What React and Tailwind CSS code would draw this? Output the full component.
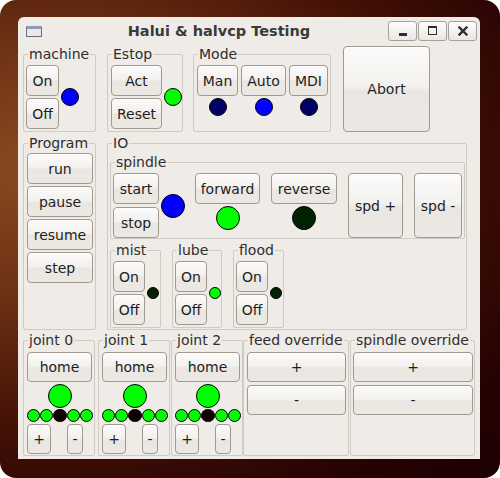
import React from "react";

const BTN =
  "flex items-center justify-center shrink-0 rounded-[4px] border border-[#a1988e] bg-[linear-gradient(to_bottom,#fcfbfa_0%,#f3f1ee_47%,#eae7e3_53%,#ece9e5_100%)] shadow-[inset_0_1px_0_#ffffff] text-[14px] leading-[16px] text-[#1e1e1e] font-['DejaVu_Sans',sans-serif]";

function Btn({ className = "", children }) {
  return <div className={`${BTN} ${className}`}>{children}</div>;
}

function Frame({ label, className = "", children }) {
  return (
    <fieldset className={`shrink-0 border border-[#cfcac3] rounded-[2px] min-w-0 ${className}`}>
      <legend className="ml-[4px] px-[1px] text-[14px] leading-[16px] text-[#2e2e2e] font-['DejaVu_Sans',sans-serif] whitespace-nowrap">
        {label}
      </legend>
      {children}
    </fieldset>
  );
}

function Led({ className = "" }) {
  return <div className={`shrink-0 rounded-full border border-black ${className}`} />;
}

function Joint({ label, className = "" }) {
  return (
    <Frame label={label} className={`w-[72px] h-[124px] ${className}`}>
      <div className="flex flex-col items-start pl-[3px] pt-[4px]">
        <div className="flex flex-col items-center w-[66px]">
          <Btn className="w-[65px] h-[30px] self-start">home</Btn>
          <Led className="w-[24px] h-[24px] bg-[#00ff00] mt-[2px]" />
          <div className="flex mt-[1px]">
            <Led className="w-[13.3px] h-[13.3px] bg-[#00ff00]" />
            <Led className="w-[13.3px] h-[13.3px] bg-[#00ff00]" />
            <Led className="w-[13.3px] h-[13.3px] bg-[#100000]" />
            <Led className="w-[13.3px] h-[13.3px] bg-[#00ff00]" />
            <Led className="w-[13.3px] h-[13.3px] bg-[#00ff00]" />
          </div>
        </div>
        <div className="flex mt-[2px]">
          <Btn className="w-[24px] h-[30px]">+</Btn>
          <Btn className="w-[16px] h-[30px] ml-[16px]">-</Btn>
        </div>
      </div>
    </Frame>
  );
}

function OnOff({ label, led, className = "" }) {
  return (
    <Frame label={label} className={`h-[86px] ${className}`}>
      <div className="flex items-center pl-[2px] pt-[3px]">
        <div className="flex flex-col gap-[2px]">
          <Btn className="w-[32px] h-[31px]">On</Btn>
          <Btn className="w-[32px] h-[31px]">Off</Btn>
        </div>
        <Led className={`w-[12px] h-[12px] ml-[2px] ${led}`} />
      </div>
    </Frame>
  );
}

export default function App() {
  return (
    <div className="w-[500px] h-[478px] bg-white">
      <div className="w-full h-full rounded-[16px] bg-[radial-gradient(ellipse_at_8%_35%,#8a4a22_0%,#6e3214_28%,#431006_60%,#250202_85%,#1c0000_100%)] pt-[17px] pl-[18px]">
        <div className="w-[462px] h-[442px] rounded-t-[6px] bg-[#efebe7] flex flex-col font-['DejaVu_Sans',sans-serif]">
          {/* title bar */}
          <div className="h-[27px] flex items-center shrink-0">
            <div className="ml-[8px] mt-[2px] w-[16px] h-[11px] border border-[#66707d] border-t-[3px] border-t-[#8d9cb2] bg-[#e9e9e9]" />
            <div className="flex-1 pl-[8px] text-center font-bold text-[14.5px] leading-[18px] text-[#3a3a3a] whitespace-nowrap">
              Halui &amp; halvcp Testing
            </div>
            <div className="flex gap-[1px] mr-[3px]">
              <div className="w-[29px] h-[20px] rounded-[3px] border border-[#a7a098] bg-[linear-gradient(to_bottom,#fdfdfc,#eae7e3)] flex items-end justify-center pb-[4px]">
                <div className="w-[8px] h-[3px] bg-[#2e2e2e]" />
              </div>
              <div className="w-[29px] h-[20px] rounded-[3px] border border-[#a7a098] bg-[linear-gradient(to_bottom,#fdfdfc,#eae7e3)] flex items-center justify-center">
                <div className="w-[9px] h-[9px] border border-[#2e2e2e] border-t-[2px]" />
              </div>
              <div className="w-[29px] h-[20px] rounded-[3px] border border-[#a7a098] bg-[linear-gradient(to_bottom,#fdfdfc,#eae7e3)] flex items-center justify-center">
                <svg width="10" height="10" viewBox="0 0 10 10">
                  <path d="M1.5 1.5 L8.5 8.5 M8.5 1.5 L1.5 8.5" stroke="#2e2e2e" strokeWidth="2.4" strokeLinecap="square" />
                </svg>
              </div>
            </div>
          </div>

          {/* content */}
          <div className="pl-[5px] pt-[2px] flex flex-col">
            {/* top row */}
            <div className="flex items-start">
              <Frame label="machine" className="w-[73px] h-[86px]">
                <div className="flex items-center pl-[2px] pt-[3px]">
                  <div className="flex flex-col gap-[2px]">
                    <Btn className="w-[33px] h-[31px]">On</Btn>
                    <Btn className="w-[33px] h-[31px]">Off</Btn>
                  </div>
                  <Led className="w-[18px] h-[18px] ml-[2px] bg-[#0000ff]" />
                </div>
              </Frame>
              <Frame label="Estop" className="w-[76px] h-[86px] ml-[11px]">
                <div className="flex items-center pl-[3px] pt-[3px]">
                  <div className="flex flex-col gap-[2px]">
                    <Btn className="w-[51px] h-[31px]">Act</Btn>
                    <Btn className="w-[51px] h-[31px]">Reset</Btn>
                  </div>
                  <Led className="w-[18px] h-[18px] ml-[2px] bg-[#00ff00]" />
                </div>
              </Frame>
              <Frame label="Mode" className="w-[138px] h-[86px] ml-[10px]">
                <div className="flex gap-[3px] pl-[3px] pt-[3px]">
                  <div className="flex flex-col items-center gap-[2px]">
                    <Btn className="w-[41px] h-[31px]">Man</Btn>
                    <Led className="w-[18px] h-[18px] bg-[#000066]" />
                  </div>
                  <div className="flex flex-col items-center gap-[2px]">
                    <Btn className="w-[45px] h-[31px]">Auto</Btn>
                    <Led className="w-[18px] h-[18px] bg-[#0000ff]" />
                  </div>
                  <div className="flex flex-col items-center gap-[2px]">
                    <Btn className="w-[39px] h-[31px]">MDI</Btn>
                    <Led className="w-[18px] h-[18px] bg-[#000066]" />
                  </div>
                </div>
              </Frame>
              <Btn className="w-[87px] h-[86px] ml-[12px]">Abort</Btn>
            </div>

            {/* middle row */}
            <div className="flex items-start mt-[3px]">
              <Frame label="Program" className="w-[73px] h-[195px]">
                <div className="flex flex-col gap-[2px] pl-[3px] pt-[2px]">
                  <Btn className="w-[66px] h-[31px]">run</Btn>
                  <Btn className="w-[66px] h-[31px]">pause</Btn>
                  <Btn className="w-[66px] h-[31px]">resume</Btn>
                  <Btn className="w-[66px] h-[31px]">step</Btn>
                </div>
              </Frame>
              <Frame label="IO" className="w-[360px] h-[195px] ml-[11px]">
                <div className="flex flex-col pl-[2px] pt-[3px]">
                  <Frame label="spindle" className="w-[355px] h-[85px]">
                    <div className="flex items-start pl-[2px] pt-[3px]">
                      <div className="flex flex-col gap-[3px]">
                        <Btn className="w-[46px] h-[31px]">start</Btn>
                        <Btn className="w-[46px] h-[31px]">stop</Btn>
                      </div>
                      <Led className="w-[24px] h-[24px] ml-[2px] self-center bg-[#0000ff]" />
                      <div className="flex flex-col items-center gap-[2px] ml-[10px]">
                        <Btn className="w-[65px] h-[31px]">forward</Btn>
                        <Led className="w-[24px] h-[24px] bg-[#00ff00]" />
                      </div>
                      <div className="flex flex-col items-center gap-[2px] ml-[11px]">
                        <Btn className="w-[66px] h-[31px]">reverse</Btn>
                        <Led className="w-[24px] h-[24px] bg-[#002200]" />
                      </div>
                      <Btn className="w-[55px] h-[65px] ml-[11px]">spd +</Btn>
                      <Btn className="w-[48px] h-[65px] ml-[11px]">spd -</Btn>
                    </div>
                  </Frame>
                  <div className="flex mt-[3px]">
                    <OnOff label="mist" led="bg-[#002200]" className="w-[51px]" />
                    <OnOff label="lube" led="bg-[#00ff00]" className="w-[50px] ml-[11px]" />
                    <OnOff label="flood" led="bg-[#002200]" className="w-[51px] ml-[11px]" />
                  </div>
                </div>
              </Frame>
            </div>

            {/* bottom row */}
            <div className="flex items-start mt-[2px]">
              <Joint label="joint 0" className="w-[71px]" />
              <Joint label="joint 1" className="ml-[3px]" />
              <Joint label="joint 2" className="ml-[1px]" />
              <Frame label="feed override" className="w-[106px] h-[124px]">
                <div className="flex flex-col gap-[3px] pl-[3px] pt-[4px]">
                  <Btn className="w-[99px] h-[30px]">+</Btn>
                  <Btn className="w-[99px] h-[30px]">-</Btn>
                </div>
              </Frame>
              <Frame label="spindle override" className="w-[125px] h-[124px] ml-[1px]">
                <div className="flex flex-col gap-[3px] pl-[2px] pt-[4px]">
                  <Btn className="w-[120px] h-[30px]">+</Btn>
                  <Btn className="w-[120px] h-[30px]">-</Btn>
                </div>
              </Frame>
            </div>
          </div>
        </div>
      </div>
    </div>
  );
}
